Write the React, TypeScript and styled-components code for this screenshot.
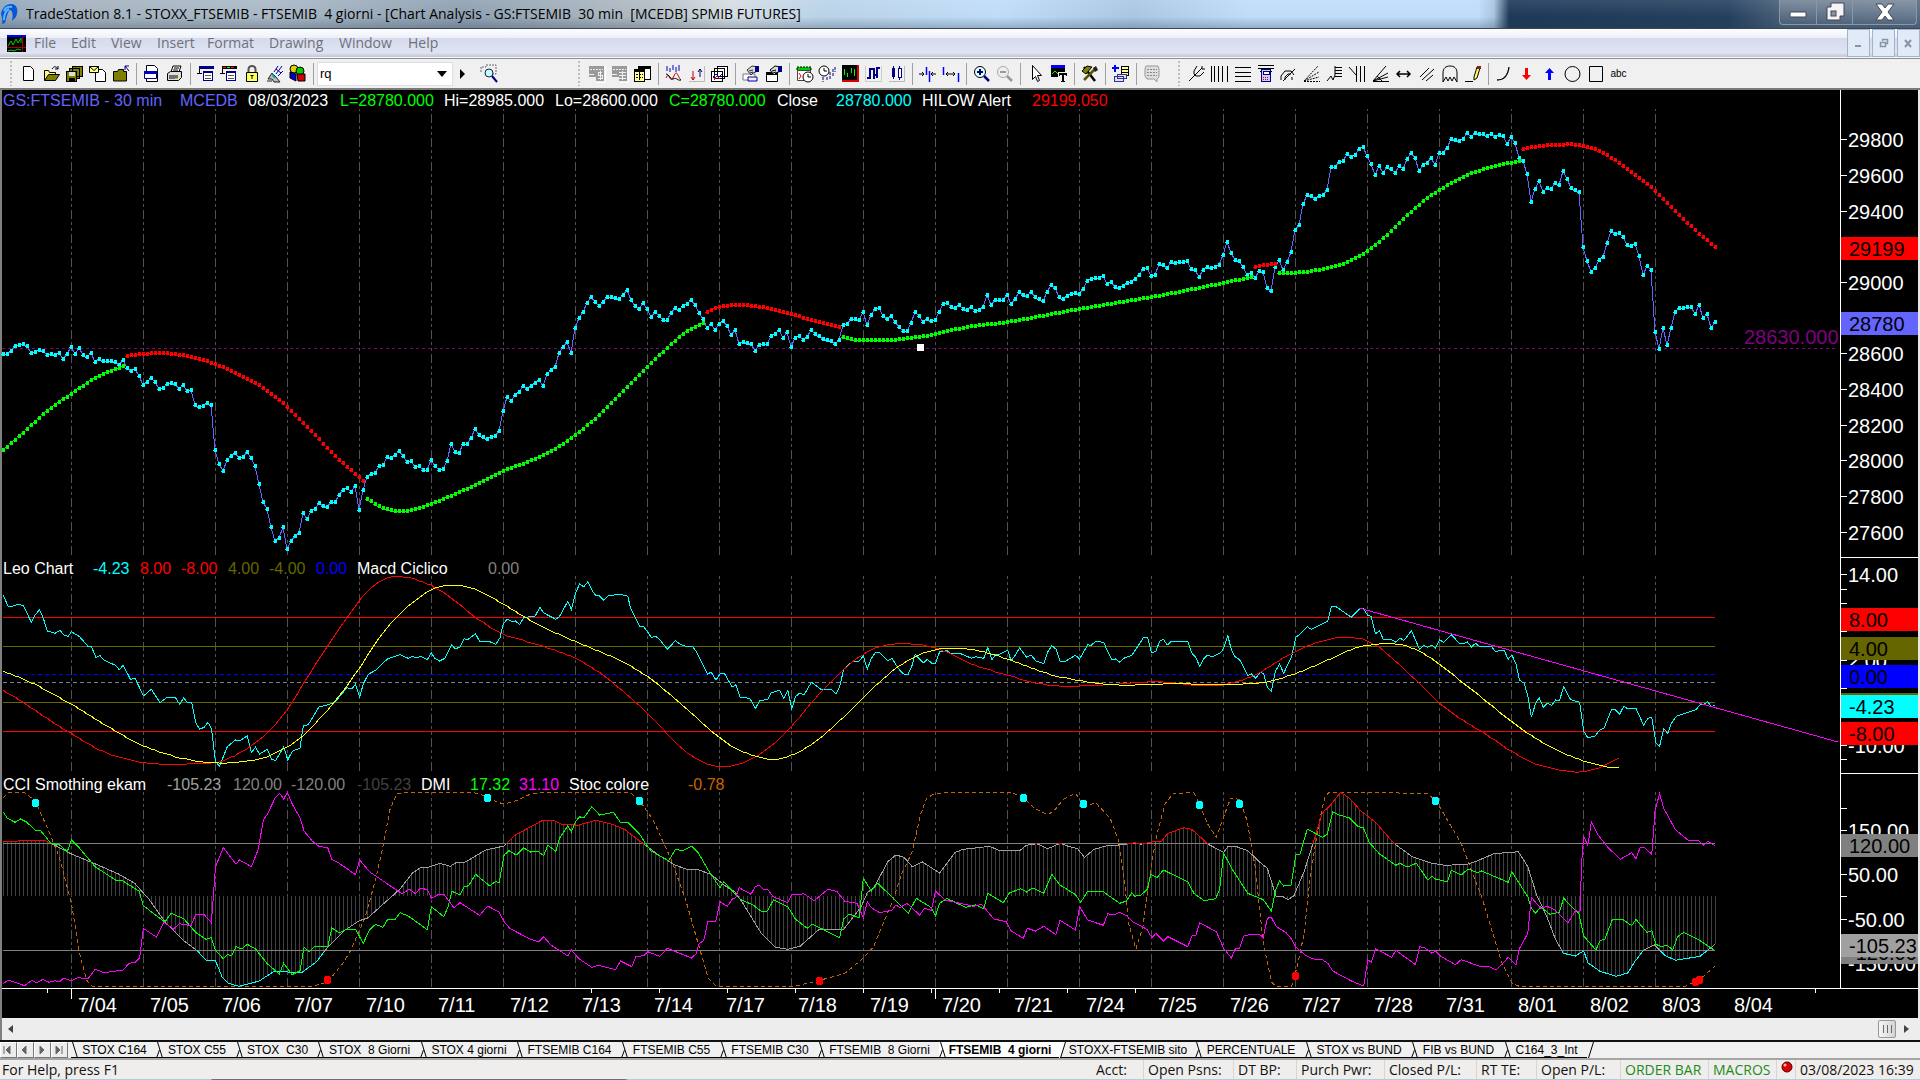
import React from "react";
import styled, { createGlobalStyle } from "styled-components";

const UI = `"Open Sans", "Noto Sans", sans-serif`;
const ARIAL = `"Liberation Sans", Arial, sans-serif`;

const Global = createGlobalStyle`
  * { box-sizing: border-box; }
  body { margin: 0; background: #f0f0f0; }
  button, input, select { font: inherit; color: inherit; }
`;

/* ---------- window frame ---------- */

const Window = styled.div`
  display: flex;
  flex-direction: column;
  min-height: 100vh;
  overflow: hidden;
  font-family: ${UI};
  font-size: 14px;
  background: #f0f0f0;
`;

const TitleBar = styled.header`
  display: flex;
  align-items: stretch;
  height: 29px;
  border-bottom: 1px solid #3c4654;
  background:
    linear-gradient(to bottom, rgba(255, 255, 255, 0.1), rgba(255, 255, 255, 0) 60%, rgba(40, 60, 80, 0.28)),
    linear-gradient(to right, #8fa6bb 0, #a3b1be 4%, #a9b8c6 14%, #8d9fb0 24%, #b1bbc4 34%, #d5dde3 38%, #b9d2e8 43%, #bfdcf8 52%, #a9c6e2 59%, #bfdcf8 65%, #bfdcf9 77%, #a8c4de 77.8%, #1d3858 78.6%, #24405f 90%, #4a6078 93%, #566b82 100%);
`;

const Title = styled.h1`
  flex: 1;
  margin: 0;
  padding-left: 6px;
  align-self: center;
  font-size: 14px;
  line-height: 20px;
  font-weight: 400;
  color: #000;
  white-space: pre;
  overflow: hidden;
`;

const Logo = styled.svg`
  width: 20px;
  height: 28px;
`;

const Controls = styled.div`
  display: flex;
  height: 25px;
  margin-right: 3px;
  border: 1px solid #8998a8;
  border-top: 0;
  border-radius: 0 0 4px 4px;
`;

const ControlButton = styled.button<{ $wide?: boolean }>`
  display: grid;
  place-items: center;
  width: ${(p) => (p.$wide ? 64 : 36)}px;
  padding: 0;
  border: 0;
  border-left: 1px solid #8998a8;
  background: linear-gradient(rgba(255, 255, 255, 0.22), rgba(255, 255, 255, 0.04));
  &:first-child { border-left: 0; }
`;

const MenuBar = styled.nav`
  display: flex;
  align-items: center;
  height: 29px;
  padding-left: 7px;
  background: linear-gradient(#fdfdff 0, #eef1f8 30%, #d5dbec 34%, #dfe4f3 85%, #c9c9dc 97%);
  border-bottom: 1px solid #f8f8f8;
`;

const MenuItem = styled.a<{ $w: number }>`
  width: ${(p) => p.$w}px;
  line-height: 20px;
  color: #6f7178;
  text-decoration: none;
`;

const MenuIcon = styled.svg`
  width: 19px;
  height: 17px;
  margin-right: 8px;
`;

const MdiButtons = styled.div`
  display: flex;
  gap: 2px;
  margin-left: auto;
  height: 28px;
`;

const MdiButton = styled.button`
  display: grid;
  place-items: center;
  width: 23px;
  padding: 0;
  border: 1px solid #9db4cc;
  background: #e0ebf7;
`;

/* ---------- toolbar ---------- */

const Toolbar = styled.div`
  display: flex;
  align-items: center;
  height: 32px;
  padding-left: 10px;
  background: #f0f0f0;
  border-top: 1px solid #8e8e8e;
  border-bottom: 2px solid #7b7b7b;
`;

const Group = styled.div<{ $gap: number }>`
  display: flex;
  align-items: center;
  margin-right: ${(p) => p.$gap}px;
`;

const Grip = styled.span`
  width: 2px;
  height: 25px;
  margin-right: 5px;
  background: repeating-linear-gradient(#bdbdbd 0 2px, transparent 2px 4px);
`;

const Separator = styled.span`
  width: 8px;
  height: 22px;
  background: linear-gradient(#a0a0a0, #a0a0a0) 4px 0 / 1px 100% no-repeat;
`;

const ToolButton = styled.button`
  display: grid;
  place-items: center;
  width: 23px;
  height: 24px;
  padding: 0;
  border: 0;
  background: none;
  font-family: ${ARIAL};
  font-size: 10px;
  svg { width: 17px; height: 17px; overflow: visible; }
`;

const Combo = styled.div`
  display: flex;
  align-items: center;
  width: 136px;
  height: 24px;
  margin-right: 1px;
  background: #fff;
  border: 1px solid #dcdfe6;
`;

const SymbolInput = styled.input`
  flex: 1;
  min-width: 0;
  padding: 0 2px;
  border: 0;
  outline: 0;
  background: none;
  font-family: ${ARIAL};
  font-size: 13px;
`;

const ArrowButton = styled.button<{ $w: number; $gap?: number }>`
  display: grid;
  place-items: center;
  width: ${(p) => p.$w}px;
  height: 22px;
  margin-right: ${(p) => p.$gap ?? 0}px;
  padding: 0;
  border: 0;
  background: none;
`;

/* ---------- chart ---------- */

const Chart = styled.main`
  display: flex;
  flex-direction: column;
  background: #000;
  border-left: 2px solid #808080;
  border-right: 2px solid #e8e8e8;
  font-family: ${ARIAL};
`;

const Panel = styled.section<{ $h: number }>`
  display: flex;
  height: ${(p) => p.$h}px;
`;

const PlotColumn = styled.div`
  display: flex;
  flex-direction: column;
  flex: 1;
  min-width: 0;
`;

const Legend = styled.div<{ $cols: number[] }>`
  display: grid;
  grid-template-columns: ${(p) => p.$cols.map((c) => c + "px").join(" ")} auto;
  justify-content: start;
  height: 19px;
  padding-left: 1px;
  font-size: 16px;
  line-height: 21px;
  white-space: pre;
`;

const LegendItem = styled.span<{ $c: string }>`
  color: ${(p) => p.$c};
`;

const Plot = styled.svg`
  flex: 1;
  width: 100%;
  min-height: 0;
  overflow: visible;
  shape-rendering: crispEdges;
`;

const AxisSvg = styled.svg`
  width: 78px;
  height: 100%;
  overflow: hidden;
  shape-rendering: crispEdges;
  font-size: 20px;
  fill: #fff;
`;

const TimeAxis = styled.svg`
  height: 30px;
  width: 100%;
  font-size: 20px;
  fill: #fff;
  shape-rendering: crispEdges;
`;

/* ---------- bottom bars ---------- */

const ScrollBar = styled.div`
  display: flex;
  align-items: center;
  justify-content: space-between;
  height: 22px;
  padding: 0 8px 0 2px;
  background: #ededed;
  border-left: 2px solid #808080;
`;

const ScrollEnd = styled.div`
  display: flex;
  align-items: center;
  gap: 4px;
`;

const Thumb = styled.button`
  width: 18px;
  height: 18px;
  padding: 0;
  border: 1px solid #979797;
  border-radius: 2px;
  background: repeating-linear-gradient(to right, #6a6a6a 0 1px, transparent 1px 4px) 4px 4px / 9px 8px no-repeat, linear-gradient(to right, #f5f5f5, #d4d4d8);
`;

const TabStrip = styled.nav`
  display: flex;
  height: 18px;
  background: #f0f0f0;
  border-top: 2px solid #111;
`;

const NavButton = styled.button`
  display: grid;
  place-items: center;
  width: 17px;
  padding: 0;
  border: 1px solid #fff;
  border-right-color: #777;
  border-bottom-color: #777;
  background: #ececec;
`;

const NavSpacer = styled.span`
  width: 3px;
`;

const Tab = styled.button<{ $w: number; $active?: boolean }>`
  display: flex;
  width: ${(p) => p.$w}px;
  padding: 0;
  border: 0;
  border-bottom: 1px solid #000;
  background: ${(p) => (p.$active ? "#fff" : "#f0f0f0")};
  font-family: ${ARIAL};
  font-size: 12px;
  line-height: 16px;
  font-weight: ${(p) => (p.$active ? 700 : 400)};
  color: #000;
  white-space: pre;
`;

const TabLabel = styled.span`
  flex: 1;
  padding-right: 6px;
  text-align: center;
`;

const Slant = styled.svg`
  width: 8px;
  height: 16px;
  flex: none;
`;

const StatusBar = styled.footer`
  display: flex;
  height: 21px;
  padding-left: 2px;
  background: #f0eeec;
  border-top: 2px solid #a5a5a5;
  font-size: 14px;
  line-height: 20px;
  color: #111;
  white-space: pre;
`;

const StatusCell = styled.span<{ $w: number; $c?: string }>`
  width: ${(p) => p.$w}px;
  padding-left: 4px;
  border-left: 1px solid #d8d6d4;
  color: ${(p) => p.$c ?? "#111"};
  &:first-of-type { border-left-color: transparent; }
`;

const StatusRight = styled.div`
  display: flex;
  margin-left: auto;
  padding-right: 2px;
`;

const TaskStrip = styled.div`
  height: 2px;
  background: linear-gradient(to right, #b9c8e0 0 211px, #6a7080 212px 625px, #b9c8e0 628px);
`;

/* ---------- icons ---------- */

const k = { fill: "none", stroke: "#000", strokeWidth: 1 };
const crisp = { shapeRendering: "crispEdges" as const };
const Doc = ({ x = 3, y = 1, w = 11, h = 15, s = "#000" }) => (
  <path d={`M${x + 0.5} ${y + 0.5}h${w - 4}l3 3v${h - 4}h${-(w - 1)}z`} fill="#fff" stroke={s} />
);
const Hand = ({ c = "#000" }) => (
  <g><path d="M5 5l5-4 6 1v4l-5 2-2 2z" fill="#ddd" stroke={c} /><path d="M13 1h4v6h-4z" fill="#000080" /><path d="M7 6l4-1M8 8l3-1" stroke={c} /></g>
);
const GreyTable = ({ dollar }: { dollar?: boolean }) => (
  <g {...crisp}>
    <path d="M1 1h15v15H8v-4H1z" fill="#9a9a9a" />
    <path d="M2 4.500h13" stroke="#f0f0f0" strokeDasharray="2 1" />
    {dollar ? (
      <path d="M14 7.500h-4v3h4v3h-4M12 6v9" fill="none" stroke="#f0f0f0" />
    ) : (
      <path d="M8 7.500h7M8 10.500h7M8 13.500h7M11.500 6v9" stroke="#f0f0f0" />
    )}
    <path d="M1 9.500h5M2 15h5" stroke="#f0f0f0" />
    <path d="M17 2v15H9" fill="none" stroke="#fff" />
  </g>
);

const icons: Record<string, React.ReactNode> = {
  new: <Doc />,
  open: <g><path d="M1.500 15V5.500h4l1 2h6v3" fill="#ffff80" stroke="#000" /><path d="M1.500 15.500l4-6h11l-4 6z" fill="#808000" stroke="#000" /><path d="M9 4c2-3 4-3 6 0m0-3v3h-3" {...k} /></g>,
  save: <g {...crisp}><path d="M6.500 1.500h10v10h-10zM3.500 3.500h10v10h-10z" fill="#808000" stroke="#000" /><path d="M.5 6.500h10v10H.5z" fill="#808000" stroke="#000" /><path d="M3 7h6v4H3z" fill="#ddd" /><path d="M3 13h6v4H3z" /></g>,
  mail: <g><Doc x={6} y={4} w={11} h={13} /><path d="M.5 1.500h9v6h-9z" fill="#ffff80" stroke="#000" /><path d="M.5 1.500l4.500 4 4.500-4" {...k} /></g>,
  folder: <g><path d="M1.500 16V6.500h4l1-2h5v2h3V16z" fill="#808000" stroke="#000" /><path d="M13 1h4M13 1v4M13 1l4 5" stroke="#000080" fill="none" /></g>,
  docwin: <g><Doc x={3} y={0} w={12} h={17} /><path d="M1.500 7.500h12v6h-12z" fill="#fff" stroke="#000080" /><path d="M1 6h13v3H1z" fill="#0000c0" /></g>,
  print: <g><path d="M5 7l2-6h8l-2 6" fill="#fff" stroke="#000" /><path d="M1.500 8.500l3-2h11v6l-3 3h-11z" fill="#ddd" stroke="#000" /><path d="M3 11h9M3 13h9M8 3h5M7 5h5" {...k} /><path d="M9 13h3v1H9z" fill="#c0c000" /></g>,
  win1: <g {...crisp}><path d="M2 1h15v3H2z" fill="#000080" /><path d="M6.500 6.500h9v9h-9z" fill="#fff" stroke="#000080" /><path d="M6 6h10v2H6z" fill="#000080" /><path d="M8 10.500h6M8 13.500h6" stroke="#555" /><path d="M2 4v5M0 8.500h5" stroke="#000" /></g>,
  win2: <g {...crisp}><path d="M2 1h15v3H2z" /><path d="M3 2h3v1H3z" fill="#f00" /><path d="M7 2h3v1H7z" fill="#0f0" /><path d="M11 2h3v1h-3z" fill="#f00" /><path d="M6.500 6.500h9v9h-9z" fill="#fff" stroke="#000080" /><path d="M6 6h10v2H6z" fill="#000080" /><path d="M8 10.500h6M8 13.500h6" stroke="#555" /><path d="M2 4v5M0 8.500h5" stroke="#000" /></g>,
  lock: <g><path d="M5.500 8V4a3.500 3 0 0 1 7 0v4" fill="none" stroke="#555" strokeWidth="2" /><path d="M3.500 7.500h11v9h-11z" fill="#ffff60" stroke="#000" /><path d="M9 10v4M7.500 10.500h3" {...k} /></g>,
  satellite: <g><path d="M10 9L16 1M8 7l4-6M12 11l5-5M10 4l5 4" fill="none" stroke="#0000a0" /><path d="M1 16h5M2 14l4-6 4 4 4 5H8l-2-3z" fill="#bbb" stroke="#222" /><path d="M6 9l3 4" stroke="#0aa" strokeWidth="2" /></g>,
  blocks: <g><circle cx="5" cy="4" r="4" fill="#e0d000" stroke="#000" /><circle cx="11" cy="6" r="4" fill="#0c0" stroke="#000" /><path d="M1 7l6 2v7l-6-3z" fill="#00c" stroke="#000" /><path d="M8 9h8v7H9z" fill="#c00" stroke="#000" /></g>,
  find: <g><path d="M1 7V2h5v-2h10v9H9" fill="#eee" stroke="#667" strokeDasharray="2 1" /><circle cx="9" cy="8" r="4" fill="#bff" stroke="#223" /><path d="M12 11l5 6" stroke="#000080" strokeWidth="2" /></g>,
  grey1: <GreyTable dollar />,
  grey2: <GreyTable />,
  table: <g {...crisp}><path d="M4.500 1.500h12v13h-12z" fill="#fff" stroke="#000" /><path d="M4 1h13v3H4z" /><path d="M.5 4.500h10v12H.5z" fill="#ffff90" stroke="#000" /><path d="M0 4h11v3H0z" /><path d="M2 9.500h7M2 12.500h7M5.500 7v9" stroke="#000" strokeDasharray="2 1" /></g>,
  indicator: <g><path d="M2 1v5M5 3v4M8 0v5M11 2v5M14 0v6" stroke="#0000c0" /><path d="M1 13c3-8 5 6 8-2s4 2 7 4" fill="none" stroke="#c00000" /><path d="M1 9c4 0 3 7 7 5s4 2 8 1" {...k} /></g>,
  updown: <g><path d="M16.500 1v15.500H1" fill="none" stroke="#bbb" /><path d="M5 6v9M3 12l2 3 2-3" fill="none" stroke="#c00000" /><path d="M12 12V4M10 7l2-3 2 3" fill="none" stroke="#000080" /></g>,
  stack: <g {...crisp}><path d="M6.500 1.500h10v10h-10zM3.500 3.500h10v10h-10zM.5 6.500h11v10H.5z" fill="#fff" stroke="#000" /><path d="M2 13l3-4 3 3 3-3" fill="none" stroke="#0000c0" /><path d="M3 15l3-4 3 3" fill="none" stroke="#c00" /></g>,
  hand1: <g><path d="M1 9h12v6H1z" fill="#fff" stroke="#778" /><path d="M6 12h9v4H6z" fill="#eef" stroke="#0000a0" /><Hand c="#333" /></g>,
  hand2: <g><path d="M1.500 7.500h11v9h-11z" fill="#fff" stroke="#000" /><path d="M1 7h12v3H1z" /><Hand /></g>,
  session: <g><path d="M1 2h14v4H1z" fill="#0c0" stroke="#000" strokeDasharray="2 1" /><path d="M1.500 5.500h13v10h-13z" fill="#fff" stroke="#444" /><path d="M3 8l2 3-2 3" stroke="#f00" fill="none" /><circle cx="12" cy="12" r="5" fill="#fff" stroke="#000" /><path d="M12 9v3h3" {...k} /></g>,
  clockbars: <g><circle cx="5" cy="6" r="5" fill="#fff" stroke="#000" /><path d="M5 3v3h3" {...k} /><path d="M4 12v5M8 12v4M11 7v7M14 4v7M16 2v5" stroke="#000080" strokeDasharray="3 1" /></g>,
  chartred: <g {...crisp}><path d="M0 0h17v17H0z" fill="#d00" /><path d="M0 0h15v15H0z" /><path d="M2.500 4v6M5.500 8v4M9.500 3v5M12.500 4v7" stroke="#0f0" /></g>,
  bars: <g {...crisp}><path d="M.5 1v15.500H16V1" fill="none" stroke="#ccc" /><path d="M2 13h3V4h4v10M12 13V3h3M9 10h3" fill="none" stroke="#000080" strokeWidth="2" /></g>,
  candles: <g {...crisp}><path d="M16.500 1v15.500H1" fill="none" stroke="#bbb" /><path d="M4 3h3v9H4z" fill="#000080" /><path d="M10 3h3v9h-3z" fill="#fff" stroke="#000080" /><path d="M5.500 1v13M11.500 1v2M11.500 12v3" stroke="#000080" /></g>,
  squeeze: <g><path d="M0 9h5M3 7l2 2-2 2M17 9h-5M14 7l-2 2 2 2" {...k} /><path d="M7.500 2v8M10.500 6v11" stroke="#00f" strokeWidth="1.500" /></g>,
  widen: <g><path d="M1.500 2v8M16.500 8v9" stroke="#00f" strokeWidth="1.500" /><path d="M4 9h9M6 7L4 9l2 2M11 7l2 2-2 2" {...k} /></g>,
  zoomin: <g><circle cx="7" cy="7" r="5.500" fill="#dff" stroke="#000" /><path d="M4 7h6M7 4v6" stroke="#000080" strokeWidth="2" /><path d="M11 11l5 5" stroke="#000080" strokeWidth="2.500" /></g>,
  zoomout: <g><circle cx="7" cy="7" r="5.500" fill="#eee" stroke="#aaa" /><path d="M4 7h6" stroke="#999" strokeWidth="2" /><path d="M11 11l5 5" stroke="#999" strokeWidth="2.500" /></g>,
  pointer: <path d="M5.500 .5v14l3-3 2 5 2-1-2-5h4z" fill="#fff" stroke="#000" />,
  charttext: <g {...crisp}><path d="M1 0h14v12H1z" /><path d="M1 0h14v3H1z" fill="#00f" /><path d="M2 9l3-3 3 3 2-2" fill="none" stroke="#0f0" /><path d="M8 7h10v10H8z" fill="#f0f0f0" /><path d="M9 8h8v3h-1V10h-2v6h1v1h-4v-1h1v-6h-2v1H9z" /></g>,
  tools: <g><path d="M3 2l11 14" stroke="#000" strokeWidth="2.500" /><path d="M1 6l5-5 5 1-6 7z" fill="#808000" stroke="#000" /><path d="M15 3L3 15" stroke="#555500" strokeWidth="2.500" /><path d="M12 3l3-2 2 4-3 2z" fill="#222" /></g>,
  addtable: <g {...crisp}><path d="M9.500 1.500h7v9h-7z" fill="#ffff90" stroke="#000" /><path d="M9 4.500h8M9 7.500h8" stroke="#000" /><path d="M0 3h7M3 0v7" stroke="#00f" strokeWidth="2" /><path d="M5.500 9.500h9v4h-9zM2.500 11.500h9v5h-9z" fill="#ddf" stroke="#333380" /></g>,
  speech: <g><path d="M3 1h12l1 3v8l-2 2v3l-3-3H4l-2-3V4z" fill="#ddd" stroke="#999" /><path d="M4 4.500h10M4 7.500h10M4 10.500h10" stroke="#888" strokeDasharray="2 1" /></g>,
  fork: <path d="M1 16l7-7M9 1L6 6v3l2 2h4l4-4M8 9l6-6M14 1v3h3" {...k} />,
  vlines: <path {...k} {...crisp} d="M.5 1v16M3.500 1v16M7.500 1v16M11.500 1v16M16.500 1v16" />,
  hlines: <path {...k} {...crisp} d="M1 2.500h16M1 7.500h16M1 11.500h16M1 16.500h16" />,
  calc: <g {...crisp}><path d="M1 .5h16M1 3.500h16M3 6.500h12" {...k} /><path d="M4.500 4.500h9v12h-9z" fill="#ccf" stroke="#000080" /><path d="M6 6h6v3H6z" fill="#fff" stroke="#000080" /><path d="M6 12.500h6M6 14.500h6" stroke="#c00" strokeDasharray="1 1" /></g>,
  arcs: <path d="M1 15v-4l4-5h6l3 4M5 15v-3l3-3h3M3 16L15 4M12 15v-3" {...k} />,
  fan1: <path d="M1 16L15 1M1 16l15-9M1 16l15-4M1 16.500h16" {...k} strokeDasharray="2 1" />,
  steps: <path {...k} d="M1 16l4-5 2 4 2-5V1M9 2.500h7M9 5.500h7M9 8.500h7M9 11.500h7" />,
  pitch: <path {...k} d="M0 2l7 8M7.500 1v16M11.500 1v16M15.500 1v16" />,
  fan2: <path d="M1 16L14 1M1 16l15-8M1 16l15-4M1 16.500h16M5 11l5 5" {...k} />,
  harrow: <path d="M2 9h13M5 6L2 9l3 3M12 6l3 3-3 3" {...k} strokeWidth="1.500" />,
  parallel: <path d="M2 12L11 3M4 15L16 4M8 16l7-6" {...k} />,
  ghost: <path d="M2 17V8c0-5 3-7 7-7s7 2 7 7v9l-3-5-2 4-2-4-2 4-2-4z" {...k} />,
  pencil: <g><path d="M10 12L13 2l3 1-3 10-3 2z" fill="#ffff60" stroke="#000" /><path d="M13 1h4v3h-4z" fill="#802020" /><path d="M1 16.500h8" {...k} /></g>,
  curve: <path d="M2 15c7 0 11-5 12-13" {...k} strokeWidth="1.300" />,
  redarrow: <path d="M7 3h3v7h3l-4.500 5L4 10h3z" fill="#f00" />,
  bluearrow: <path d="M7 15h3V8h3L8.500 3 4 8h3z" fill="#00f" />,
  circle: <circle cx="8.500" cy="9" r="7.500" {...k} />,
  rect: <path d="M2.500 1.500h13v15h-13z" {...k} />,
};

const Tool = ({ name }: { name: string }) =>
  name === "|" ? (
    <Separator />
  ) : (
    <ToolButton aria-label={name === "abc" ? undefined : name}>
      {name === "abc" ? "abc" : <svg viewBox="0 0 17 17">{icons[name]}</svg>}
    </ToolButton>
  );

const Tools = ({ list }: { list: string }) => (
  <>{list.split(" ").map((n, i) => <Tool key={i} name={n} />)}</>
);

/* ---------- series data ---------- */

type Pt = [number, number];
const FIRST = 3;
const LAST = 1715;
const STEP = 4;

// One close per 30 minute bar, in thirds of a pixel below the stated base line.
const closesA = "161 161 153 139 134 132 138 158 155 151 152 165 162 164 159 177 161 140 161 143 165 171 159 185 177 182 182 184 186 195 180 204 213 207 228 255 246 233 246 267 263 252 249 252 266 255 272 270 314 320 318 309 315 450 491 513 480 467 458 473 470 455 474 497 552 605 627 681 723 713 680 747 722 708 699 638 657 632 627 608 617 621 605 605 585 570 563 575 557 630 569 531 521 519 497 495 470 474 464 453 467 486 483 501 497 510 510 480 497 510 506 482 431 456 459 432 432 413 386 405 411 416 411 408 392 332 290 303 285 275 257 267 257 249 239 258 221 210 201 158 140 125 160";
const closesB = "653 623 606 578 560 576 588 575 560 561 563 567 555 539 570 588 597 578 597 621 605 618 630 630 608 593 600 588 581 569 584 608 627 654 641 660 641 632 647 675 660 702 695 698 701 722 704 702 702 677 671 661 684 665 710 683 677 690 681 661 671 678 687 689 692 702 689 645 641 628 627 630 605 644 614 596 594 617 628 617 637 651 662 662 638 605 617 635 626 633 629 605 583 578 590 593 585 596 600 590 603 600 590 554 584 569 569 569 554 582 566 547 554 558 545 560 566 573 545 524 533 562 567 557 551 549 552 536 512 508 503 503 497 522 515 531 534 527 518 516 508 494 478 474 498 494 461 464 474 455 459 455 455 453 477 480 501 479 470 473 471 464 434 395 429 450 453 470 495 488 504 482 485 534 543 472 449 480 455 425 359 344 281 254 257 267 257 255 239 170 171 155 153 131 141 135 117 110 137 162 195 167 188 170 176 189 167 177 147 128 144 183 164 158 143 165 128 129 113 87 90 94 86 68 81 68 72 72 78 72 81 75 78 102 81 98 144 153 191 276 237 212 246 233 237 220 225 182 207 234 240 245 410 452 487 474 449 440 399 362 372 368 380 404 408 402 437 495 467 480 665 717 653 704 653 605 594 594 591 591 612 584 624 611 654 636";

const nums = (s: string) => s.trim().split(/\s+/).map(Number);
const price: Pt[] = [
  ...nums(closesA).map((v) => 300 + v / 3),
  ...nums(closesB).map((v) => 110 + v / 3),
].map((y, i) => [FIRST + i * STEP, Math.round(y)]);

const pairs = (s: string): Pt[] => {
  const n = nums(s);
  const out: Pt[] = [];
  for (let i = 0; i < n.length; i += 2) out.push([n[i], n[i + 1]]);
  return out;
};

// Indicator readings come in three blocks that start at x = 0, 600 and 1200.
const blocks = (...parts: string[]): Pt[] =>
  parts.flatMap((s, i) => pairs(s).map(([x, y]): Pt => [i * 600 + x / 2.45, 550 + y / 3]));

const smoothAt = (p: Pt[], x: number) => {
  let i = 0;
  while (i < p.length - 2 && p[i + 1][0] <= x) i++;
  const slope = (j: number) => {
    const a = p[Math.max(0, j - 1)];
    const b = p[Math.min(p.length - 1, j + 1)];
    return (b[1] - a[1]) / (b[0] - a[0]);
  };
  const h = p[i + 1][0] - p[i][0];
  const t = (x - p[i][0]) / h;
  const t2 = t * t;
  const t3 = t2 * t;
  return (2 * t3 - 3 * t2 + 1) * p[i][1] + (t3 - 2 * t2 + t) * h * slope(i) + (3 * t2 - 2 * t3) * p[i + 1][1] + (t3 - t2) * h * slope(i + 1);
};

const sample = (p: Pt[]): Pt[] => {
  const out: Pt[] = [];
  const end = p[p.length - 1][0] + 1;
  for (let x = Math.round(p[0][0]); x <= end; x += STEP) out.push([x, Math.round(smoothAt(p, x))]);
  return out;
};

const averages: { c: string; p: string }[] = [
  { c: "#00ff00", p: "3 450 27 429 47 411 71 394 95 378 123 366" },
  { c: "#ff0000", p: "127 356 143 354 160 353 175 354 195 358 215 364 239 375 263 388 287 407 311 431 335 456 363 481" },
  { c: "#00ff00", p: "367 499 383 508 399 511 415 509 431 504 455 494 479 483 503 471 527 462 551 451 575 435 599 415 620 394 635 379 651 363 667 348 683 334 703 323" },
  { c: "#ff0000", p: "707 312 719 307 743 305 767 308 791 314 815 321 839 327" },
  { c: "#00ff00", p: "843 337 859 340 887 340 911 338 935 334 967 327 1007 322 1079 309 1151 297 1223 283 1251 277" },
  { c: "#ff0000", p: "1255 267 1263 265 1275 264" },
  { c: "#00ff00", p: "1279 273 1303 272 1327 268 1343 264 1367 251 1391 231 1415 208 1439 190 1467 175 1495 166 1519 161" },
  { c: "#ff0000", p: "1523 149 1539 146 1551 145 1579 145 1599 151 1619 163 1643 181 1655 191 1675 211 1695 230 1715 247" },
];

const leo = blocks(
  "8 136 20 169 30 169 45 163 57 167 77 217 86 195 97 179 106 205 116 243 135 250 147 241 155 254 167 259 175 245 195 260 216 290 224 290 235 322 245 317 255 331 283 346 292 359 302 346 320 389 331 384 351 438 371 418 392 458 410 442 430 443 440 463 450 443 460 459 470 458 480 519 489 538 500 532 509 517 518 535 528 635 538 648 557 590 577 570 587 573 606 557 616 608 626 592 636 612 655 598 665 627 675 632 695 591 705 630 716 604 735 594 743 527 755 524 782 470 800 466 820 457 850 413 862 417 871 403 881 441 890 402 902 373 920 361 935 343 950 326 980 314 1000 325 1010 319 1021 324 1030 319 1047 329 1057 309 1066 326 1077 333 1090 325 1107 284 1115 297 1127 291 1137 266 1145 270 1165 251 1175 274 1200 275 1215 283 1225 263 1233 221 1243 208 1253 214 1263 213 1273 224 1283 203 1311 198 1323 172 1332 189 1362 208 1371 199 1391 154 1400 178 1410 130 1420 101 1430 111 1440 95 1450 120 1460 137 1469 138",
  "9 151 20 137 50 133 68 139 75 175 97 229 107 230 126 262 136 259 146 268 165 298 185 272 195 282 215 291 226 288 235 303 264 373 272 366 284 390 294 372 305 371 324 411 333 404 343 442 367 445 381 475 391 453 411 448 419 429 440 421 450 445 460 421 470 476 479 440 488 430 500 434 518 397 540 417 567 419 578 432 587 411 597 358 620 333 635 333 645 318 655 357 665 325 675 307 685 307 705 333 715 325 735 362 745 373 755 373 765 345 772 313 792 339 802 328 813 340 822 340 832 306 842 304 850 301 860 312 880 309 910 325 920 320 940 325 950 292 960 329 970 313 980 312 999 300 1007 332 1018 315 1028 293 1045 322 1056 315 1068 333 1087 341 1097 305 1107 287 1117 297 1127 333 1137 336 1165 316 1175 327 1195 284 1203 287 1214 274 1234 277 1244 305 1255 330 1263 327 1273 336 1285 324 1303 316 1332 262 1342 264 1351 309 1362 303 1371 274 1380 268 1390 285 1400 274 1440 275 1450 309 1460 323 1469 349",
  "10 325 19 315 30 320 50 309 58 295 68 257 77 300 87 322 97 329 117 376 126 372 137 385 147 366 156 372 165 412 175 424 185 363 195 342 205 370 225 318 235 262 245 253 263 230 273 238 313 213 322 170 332 169 371 202 391 176 400 176 411 196 419 199 430 251 440 243 449 268 470 269 480 277 490 264 499 272 518 242 538 298 548 286 558 292 568 285 577 295 587 270 597 277 616 254 635 280 645 282 655 276 665 291 675 280 685 290 715 291 725 306 735 300 745 301 755 328 764 315 774 341 783 391 794 400 803 438 812 501 822 461 831 443 841 472 851 460 862 466 871 450 881 451 891 410 908 449 930 457 940 544 950 563 968 558 980 539 990 534 1008 479 1018 480 1028 493 1038 469 1048 476 1068 475 1087 526 1097 505 1107 502 1117 578 1126 589 1136 536 1146 550 1155 520 1167 499 1185 491 1215 479 1225 465 1235 462 1244 455 1253 470 1262 466",
);

const macdFast = blocks(
  "8 421 60 460 116 506 175 551 250 603 320 630 380 640 480 640 540 634 600 600 655 548 704 478 755 378 803 288 850 203 900 125 945 86 980 79 1020 89 1060 109 1110 148 1165 202 1233 252 1320 285 1410 325 1455 357",
  "30 397 90 460 140 520 205 600 265 642 305 649 350 638 410 597 470 527 530 442 590 367 640 318 690 288 740 280 790 285 850 306 910 342 999 376 1060 396 1110 406 1190 406 1280 400 1370 394 1450 405",
  "5 406 50 405 100 392 150 365 233 305 320 266 370 262 411 273 450 303 520 380 587 460 630 500 700 552 763 604 830 645 900 663 945 663 980 652 1026 623",
);

const macdSlow = blocks(
  "8 364 80 400 175 463 290 548 360 592 440 623 510 636 570 637 640 625 690 600 740 560 790 497 830 440 880 355 930 262 980 192 1030 140 1070 113 1110 105 1165 118 1233 162 1310 218 1410 275",
  "0 305 60 338 120 383 200 463 293 563 350 605 420 627 470 615 520 582 570 532 645 443 700 380 760 328 820 299 870 294 930 302 1000 328 1100 372 1175 391 1230 401 1290 404 1400 400",
  "0 401 60 401 120 400 165 395 233 371 300 337 380 294 411 286 460 280 510 290 560 320 620 375 700 452 763 514 840 578 920 624 985 648 1026 653",
);

const cci = blocks(
  "8 875 62 872 108 871 135 886 175 912 240 945 290 972 330 1000 365 1048 404 1115 450 1172 482 1201 505 1230 528 1232 545 1283 560 1300 585 1309 608 1302 635 1293 670 1265 740 1267 775 1236 800 1196 845 1141 880 1112 900 1105 950 1050 980 1017 1010 970 1030 953 1050 952 1077 940 1103 949 1117 938 1140 936 1190 900 1235 888 1260 857 1300 830 1330 811 1355 811 1375 822 1415 826 1460 811",
  "30 823 60 838 90 866 105 880 140 912 180 943 210 957 240 959 270 972 310 1010 330 1025 350 1060 395 1150 430 1192 460 1198 490 1189 535 1140 597 1138 640 1070 655 1028 672 1011 705 935 725 915 745 922 765 950 790 936 832 969 870 907 890 898 955 889 975 900 1030 900 1045 886 1070 881 1097 896 1127 880 1150 890 1170 896 1187 922 1210 898 1240 888 1280 884 1310 878 1325 883 1360 874 1375 876 1390 851 1430 833 1450 838",
  "20 883 58 907 68 890 90 890 117 902 147 937 165 955 187 1041 200 1038 216 1049 230 1037 255 965 282 860 300 788 320 765 344 727 365 743 395 784 430 817 475 880 520 920 565 939 600 946 655 943 680 932 720 911 780 905 803 950 825 1035 850 1100 870 1165 890 1210 920 1218 940 1202 950 1238 980 1264 1020 1279 1048 1269 1065 1235 1087 1200 1113 1185 1140 1217 1165 1231 1225 1219 1262 1183",
);

const dmiPlus = blocks(
  "8 787 18 805 37 817 50 807 65 816 86 840 100 843 125 880 146 885 165 905 175 869 195 895 233 950 283 990 300 992 341 1024 351 1067 404 1116 419 1090 450 1106 480 1148 505 1168 518 1163 528 1201 547 1226 557 1214 568 1217 578 1190 592 1197 606 1183 626 1197 655 1241 684 1272 695 1240 716 1274 735 1262 745 1192 757 1205 772 1189 803 1190 813 1134 831 1148 845 1140 871 1138 890 1180 905 1140 920 1123 938 1132 950 1108 968 1108 980 1088 1000 1098 1047 1139 1057 1070 1087 1100 1098 1070 1107 1024 1127 1034 1137 1011 1148 1007 1165 973 1200 1008 1213 995 1223 997 1235 915 1247 902 1265 915 1283 894 1300 906 1317 903 1332 917 1342 886 1362 904 1371 865 1391 827 1400 845 1410 815 1420 800 1430 804 1450 770 1469 795",
  "33 787 50 817 68 817 97 852 110 878 125 903 168 932 185 898 203 902 225 889 240 907 265 960 294 1013 303 995 343 1048 375 1065 395 1084 410 1083 425 1050 460 1070 479 1108 508 1135 520 1123 545 1137 587 1163 597 1107 610 1092 635 1103 645 985 665 1023 680 1000 715 1040 755 1090 775 1045 812 1073 822 1098 832 1060 850 1045 895 1072 920 1065 940 1076 950 1030 988 1058 1003 1029 1030 1016 1045 1026 1060 1014 1087 1030 1107 973 1127 1005 1165 1034 1178 1057 1195 1023 1233 1025 1273 1060 1290 1053 1303 1028 1310 1039 1325 1035 1340 1020 1350 973 1365 983 1380 960 1440 995 1455 1030",
  "10 1052 38 1046 48 1020 58 910 80 960 117 1030 155 1049 175 1084 185 1020 195 993 205 1008 223 1005 235 915 245 913 263 837 300 862 312 853 325 785 340 795 365 803 388 830 400 833 415 878 440 912 480 946 490 940 508 951 530 940 558 990 568 978 577 987 606 995 616 961 640 975 657 957 680 968 690 963 755 997 764 965 783 1002 803 1040 812 1075 822 1090 835 1070 857 1093 880 1087 891 1045 908 1067 928 1090 940 1158 970 1200 980 1172 992 1167 1010 1110 1035 1108 1058 1127 1068 1108 1095 1147 1107 1142 1117 1183 1130 1190 1145 1186 1158 1200 1170 1160 1185 1147 1225 1172 1260 1201",
);

const dmiMinus = blocks(
  "8 1301 20 1290 60 1307 78 1291 90 1298 105 1288 120 1297 135 1292 146 1296 155 1285 175 1292 190 1283 216 1286 233 1258 255 1268 302 1260 316 1240 331 1237 342 1224 351 1135 383 1161 402 1117 425 1137 440 1121 468 1127 480 1092 500 1094 518 1118 528 950 547 893 578 942 587 930 616 950 633 897 645 810 655 793 675 742 685 730 695 747 704 727 716 762 735 803 745 843 765 873 780 888 803 894 813 928 831 940 871 974 881 930 905 965 985 1031 1003 1018 1018 1031 1030 1014 1047 1019 1057 1045 1075 1033 1088 1034 1112 1073 1127 1058 1175 1096 1195 1068 1223 1087 1235 1115 1250 1136 1300 1168 1320 1175 1332 1160 1350 1185 1391 1218 1400 1200 1420 1228 1450 1252 1465 1246",
  "38 1259 50 1233 78 1250 88 1220 107 1217 117 1205 146 1219 165 1195 224 1224 235 1212 243 1180 254 1172 264 1115 284 1113 294 1055 312 1069 325 1046 333 1043 341 1013 370 1033 380 1010 390 1006 400 1018 412 1020 424 1040 460 1058 470 1034 490 1035 498 1030 525 1052 558 1018 580 1024 600 1054 630 1060 645 1104 655 1055 665 1073 685 1088 715 1081 725 1065 735 1073 752 1060 783 1095 795 1075 812 1081 822 1023 845 1050 915 1069 935 1063 965 1107 995 1115 1007 1142 1037 1165 1047 1135 1067 1143 1087 1129 1117 1154 1127 1111 1165 1140 1175 1070 1195 1110 1233 1126 1244 1091 1260 1095 1273 1087 1290 1097 1305 1115 1340 1138 1352 1163 1362 1150 1381 1173 1391 1160 1440 1190 1450 1158 1460 1156 1469 1118",
  "40 1145 58 1195 77 1224 87 1195 97 1195 107 1158 125 1153 137 1155 145 1152 155 1163 165 1105 175 1102 187 1130 210 1147 225 1168 235 1192 260 1217 280 1228 300 1229 313 1240 325 1263 371 1293 401 1308 411 1229 420 1237 430 1196 470 1222 480 1201 528 1244 538 1190 550 1193 568 1210 577 1203 590 1219 626 1244 640 1229 690 1251 705 1248 725 1260 740 1243 755 1222 774 1245 783 1195 803 1150 812 1042 835 1075 850 1069 870 1080 901 1119 920 1082 931 1085 935 940 940 858 950 887 959 815 975 855 1000 893 1030 928 1058 908 1068 927 1078 893 1088 892 1107 913 1115 780 1126 731 1136 775 1165 839 1195 870 1222 873 1233 886 1244 874 1262 887",
);

const stoc = blocks(
  "8 743 20 728 60 728 86 752 120 845 145 920 175 1060 195 1210 212 1290 225 1308 770 1308 803 1295 840 1240 860 1200 895 1100 920 990 940 880 955 780 972 732 985 728 1160 728 1195 740 1215 755 1235 762 1265 752 1300 732 1325 728 1469 728",
  "75 728 97 752 130 810 175 930 210 1050 245 1200 265 1285 285 1308 480 1308 535 1292 600 1270 640 1230 670 1190 715 1060 740 970 765 905 785 795 800 745 818 732 850 728 1010 728 1037 743 1065 775 1097 794 1112 783 1135 748 1165 730 1185 768 1215 759 1250 805 1270 870 1285 990 1295 1120 1313 1197 1330 1130 1350 950 1365 850 1385 760 1405 730 1455 728 1468 762",
  "20 825 40 862 58 800 75 745 97 748 115 810 135 950 155 1180 175 1295 185 1308 225 1308 240 1240 255 1150 270 980 290 830 305 745 315 728 480 728 510 732 555 730 577 750 640 880 690 1040 740 1240 765 1300 780 1308 1190 1308 1225 1288 1262 1248",
);

const line = (p: Pt[]) => p.map(([x, y]) => `${x.toFixed(1)},${y.toFixed(1)}`).join(" ");
const dots = (p: Pt[]) => p.map(([x, y]) => `M${x - 1} ${y - 2}h3v4h-3zM${x - 2} ${y}h1v1h-1z`).join("");

const linearAt = (p: Pt[], x: number) => {
  let i = 0;
  while (i < p.length - 2 && p[i + 1][0] <= x) i++;
  const t = (x - p[i][0]) / (p[i + 1][0] - p[i][0]);
  return p[i][1] + t * (p[i + 1][1] - p[i][1]);
};

const barXs = price.map(([x]) => x);
const ZERO = 896;
const days = "7/04 7/05 7/06 7/07 7/10 7/11 7/12 7/13 7/14 7/17 7/18 7/19 7/20 7/21 7/24 7/25 7/26 7/27 7/28 7/31 8/01 8/02 8/03 8/04".split(" ");

/* The plots share one coordinate space; each shows the slice from `top` down. */
const Canvas = ({ top, children }: { top: number; children: React.ReactNode }) => (
  <Plot>
    <g transform={`translate(-2 ${-top})`}>{children}</g>
  </Plot>
);

const Grid = ({ from, to, phase }: { from: number; to: number; phase: number }) => (
  <g stroke="#505050" strokeDasharray="9 3 3 3 3 3" strokeDashoffset={phase}>
    {days.slice(0, 23).map((d, i) => <line key={d} x1={71.5 + i * 72} x2={71.5 + i * 72} y1={from} y2={to} />)}
  </g>
);

const Level = ({ y, c, dash }: { y: number; c: string; dash?: boolean }) => (
  <line x1={FIRST} x2={LAST} y1={y + 0.5} y2={y + 0.5} stroke={c} strokeDasharray={dash ? "4 3" : undefined} />
);

type Mark = { y: number; t?: string; bg?: string; fg?: string };
const Axis = ({ top, marks, last }: { top: number; marks: Mark[]; last?: boolean }) => (
  <AxisSvg>
    <g transform={`translate(0 ${-top})`}>
      {marks.map((m, i) =>
        m.bg ? (
          <g key={i}>
            <rect x="1" y={m.y - 11} width="77" height="23" fill={m.bg} />
            {m.t && <text x="9" y={m.y + 8} fill={m.fg ?? "#000"}>{m.t}</text>}
          </g>
        ) : (
          <g key={i}>
            <rect x="1" y={m.y} width="6" height="1" />
            {m.t && <text x="8" y={m.y + 8}>{m.t}</text>}
          </g>
        ),
      )}
      <rect x="0" y={top} width="1" height="500" />
    </g>
    {!last && <rect x="0" y="100%" width="78" height="1" transform="translate(0 -1)" />}
  </AxisSvg>
);

const priceMarks: Mark[] = [
  { y: 139, t: "29800" }, { y: 175, t: "29600" }, { y: 211, t: "29400" }, { y: 282, t: "29000" }, { y: 318, t: "28800" },
  { y: 353, t: "28600" }, { y: 389, t: "28400" }, { y: 425, t: "28200" }, { y: 460, t: "28000" }, { y: 496, t: "27800" }, { y: 532, t: "27600" },
  { y: 248, t: "29199", bg: "#ff0000" }, { y: 323, t: "28780", bg: "#6464ff" },
];
const leoMarks: Mark[] = [
  { y: 574, t: "14.00" }, { y: 589 }, { y: 603 }, { y: 631 }, { y: 660, t: "2.00" }, { y: 688 }, { y: 745, t: "-10.00" }, { y: 759 },
  { y: 619, t: "8.00", bg: "#ff0000" }, { y: 648, t: "4.00", bg: "#666600" }, { y: 676, t: "0.00", bg: "#0000ff" },
  { y: 704, bg: "#666600" }, { y: 706, t: "-4.23", bg: "#00ffff" }, { y: 733, t: "-8.00", bg: "#ff0000" },
];
const cciMarks: Mark[] = [
  { y: 808 }, { y: 830, t: "150.00" }, { y: 874, t: "50.00" }, { y: 896 }, { y: 919, t: "-50.00" }, { y: 963, t: "-150.00" },
  { y: 845, t: "120.00", bg: "#808080" }, { y: 952, t: "-120.00", bg: "#808080" }, { y: 945, t: "-105.23", bg: "#a0a0a0" },
];

const Legends = ({ cols, items }: { cols: number[]; items: [string, string][] }) => (
  <Legend $cols={cols}>
    {items.map(([t, c], i) => <LegendItem key={i} $c={c}>{t}</LegendItem>)}
  </Legend>
);

const highDots: Pt[] = [[35, 803], [487, 798], [639, 801], [1023, 798], [1083, 804], [1199, 805], [1239, 804], [1435, 801]];
const lowDots: Pt[] = [[327, 980], [819, 981], [1295, 976], [1695, 982], [1699, 980]];
const cciLine = line(cci);

const menu: [string, number][] = [["File", 37], ["Edit", 40], ["View", 46], ["Insert", 50], ["Format", 62], ["Drawing", 70], ["Window", 69], ["Help", 40]];
const tabs: [string, number][] = [
  ["STOX C164", 85], ["STOX C55", 80], ["STOX  C30", 81], ["STOX  8 Giorni", 103], ["STOX 4 giorni", 96], ["FTSEMIB C164", 105], ["FTSEMIB C55", 99],
  ["FTSEMIB C30", 98], ["FTSEMIB  8 Giorni", 121], ["FTSEMIB  4 giorni", 120], ["STOXX-FTSEMIB sito", 136], ["PERCENTUALE", 110], ["STOX vs BUND", 106], ["FIB vs BUND", 93], ["C164_3_Int", 83],
];
const ACTIVE = 9;
const navIcons = ["M2 1v8M8 1L4 5l4 4z", "M7 1L3 5l4 4z", "M4 1l4 4-4 4z", "M3 1l4 4-4 4zM9 1v8"];
const navNames = ["First sheet", "Previous sheet", "Next sheet", "Last sheet"];

export default function App() {
  return (
    <Window>
      <Global />
      <TitleBar>
        <Logo viewBox="0 0 20 28">
          <path d="M1 14C2 8 6 4 11 4c6 0 8 6 5 13l-4 4c1-6 1-10-2-11-2 1-3 6-5 13l-3 1c1-3 0-6-1-10z" fill="#0b55d8" />
          <path d="M4 11c1-3 4-5 8-4M4 20c0-5 1-9 5-11" fill="none" stroke="#56b8ff" strokeWidth="2" />
        </Logo>
        <Title>TradeStation 8.1 - STOXX_FTSEMIB - FTSEMIB  4 giorni - [Chart Analysis - GS:FTSEMIB  30 min  [MCEDB] SPMIB FUTURES]</Title>
        <Controls>
          <ControlButton aria-label="Minimize"><svg width="18" height="18"><rect x="1" y="9" width="16" height="5" rx="1" fill="#fff" stroke="#445" /></svg></ControlButton>
          <ControlButton aria-label="Restore"><svg width="20" height="20"><path d="M6 1h13v13h-4v4H2V5h4z" fill="#f4f4f4" stroke="#445" /><rect x="6" y="9" width="5" height="5" fill="#8497aa" stroke="#445" /></svg></ControlButton>
          <ControlButton $wide aria-label="Close"><svg width="20" height="18"><path d="M1 1h6l3 4 3-4h6l-6 8 6 8h-6l-3-4-3 4H1l6-8z" fill="#fff" stroke="#445" /></svg></ControlButton>
        </Controls>
      </TitleBar>

      <MenuBar>
        <MenuIcon viewBox="0 0 19 17"><path d="M0 0h19v17H0z" /><path d="M0 0h19v2H0z" fill="#00f" /><path d="M1 11l3-5 2 4 3-6 2 4 3-5v5" fill="none" stroke="#0c0" /><path d="M0 12.500h19M15.500 2v15" stroke="#a00" /><path d="M1 16l3-1 3 1 4-2 3 1" stroke="#0c0" fill="none" /></MenuIcon>
        {menu.map(([t, w]) => <MenuItem key={t} $w={w} href="#">{t}</MenuItem>)}
        <MdiButtons>
          <MdiButton aria-label="Minimize chart"><svg width="9" height="9"><rect x="1" y="6" width="6" height="2" fill="#8595a5" /></svg></MdiButton>
          <MdiButton aria-label="Restore chart"><svg width="10" height="10"><path d="M3.500 3V1.500h5v4H7M1.500 4.500h5v4h-5z" fill="none" stroke="#8595a5" strokeWidth="1.500" /></svg></MdiButton>
          <MdiButton aria-label="Close chart"><svg width="9" height="9"><path d="M1 1l6 7M7 1L1 8" stroke="#8595a5" strokeWidth="2" /></svg></MdiButton>
        </MdiButtons>
      </MenuBar>

      <Toolbar>
        <Group $gap={78}>
          <Grip />
          <Tools list="new open save mail folder | docwin print | win1 win2 lock satellite blocks |" />
          <Combo>
            <SymbolInput aria-label="Symbol" defaultValue="rq" />
            <ArrowButton $w={20} aria-label="Symbol list"><svg width="10" height="6"><path d="M0 0h10L5 6z" /></svg></ArrowButton>
          </Combo>
          <ArrowButton $w={16} $gap={7} aria-label="Go"><svg width="5" height="10"><path d="M0 0l5 5-5 5z" /></svg></ArrowButton>
          <Tools list="find" />
        </Group>
        <Group $gap={15}>
          <Grip />
          <Tools list="grey1 grey2 table | indicator updown stack | hand1 hand2 | session clockbars chartred bars candles | squeeze widen | zoomin zoomout | pointer charttext | tools | addtable | speech" />
        </Group>
        <Group $gap={0}>
          <Grip />
          <Tools list="fork vlines hlines calc arcs fan1 steps pitch fan2 harrow parallel ghost pencil | curve redarrow bluearrow circle rect abc" />
        </Group>
      </Toolbar>

      <Chart>
        <Panel $h={468}>
          <PlotColumn>
            <Legends
              cols={[177, 68, 92, 104, 111, 114, 108, 59, 86, 110]}
              items={[["GS:FTSEMIB - 30 min", "#6464ff"], ["MCEDB", "#6464ff"], ["08/03/2023", "#fff"], ["L=28780.000", "#00ff00"], ["Hi=28985.000", "#fff"], ["Lo=28600.000", "#fff"], ["C=28780.000", "#00ff00"], ["Close", "#fff"], ["28780.000", "#00ffff"], ["HILOW Alert", "#fff"], ["29199.050", "#ff0000"]]}
            />
            <Canvas top={109}>
              <Grid from={109} to={555} phase={19} />
              <line x1="2" x2="1836" y1="348.500" y2="348.500" stroke="#800080" strokeDasharray="3 3" />
              <polyline points={line(price)} fill="none" stroke="#6464ff" />
              <path d={dots(price)} fill="#00ffff" />
              {averages.map((a, i) => <path key={i} d={dots(sample(pairs(a.p)))} fill={a.c} />)}
              <rect x="917" y="344" width="7" height="7" fill="#fff" />
              <text x="1744" y="344" fill="#800080" fontSize="20">28630.000</text>
            </Canvas>
          </PlotColumn>
          <Axis top={90} marks={priceMarks} />
        </Panel>

        <Panel $h={216}>
          <PlotColumn>
            <Legends
              cols={[90, 47, 41, 47, 41, 47, 41, 131]}
              items={[["Leo Chart", "#fff"], ["-4.23", "#00ffff"], ["8.00", "#ff0000"], ["-8.00", "#ff0000"], ["4.00", "#666600"], ["-4.00", "#666600"], ["0.00", "#0000ff"], ["Macd Ciclico", "#fff"], ["0.00", "#808080"]]}
            />
            <Canvas top={577}>
              <Grid from={576} to={771} phase={6} />
              <Level y={617} c="#ff0000" />
              <Level y={646} c="#666600" />
              <Level y={674} c="#0000ff" dash />
              <Level y={682} c="#808080" dash />
              <Level y={702} c="#666600" />
              <Level y={731} c="#ff0000" />
              <polyline points={line(leo)} fill="none" stroke="#00ffff" />
              <polyline points={line(sample(macdFast))} fill="none" stroke="#ff0000" />
              <polyline points={line(sample(macdSlow))} fill="none" stroke="#ffff00" />
              <line x1="1359" y1="608" x2="1838" y2="742" stroke="#ff00ff" />
            </Canvas>
          </PlotColumn>
          <Axis top={558} marks={leoMarks} />
        </Panel>

        <Panel $h={214}>
          <PlotColumn>
            <Legends
              cols={[164, 66, 58, 66, 64, 49, 49, 50, 119]}
              items={[["CCI Smothing ekam", "#fff"], ["-105.23", "#a0a0a0"], ["120.00", "#808080"], ["-120.00", "#808080"], ["-105.23", "#404040"], ["DMI", "#fff"], ["17.32", "#00ff00"], ["31.10", "#ff00ff"], ["Stoc colore", "#fff"], ["-0.78", "#c86400"]]}
            />
            <Canvas top={793}>
              <defs>
                <clipPath id="over"><rect x="0" y="780" width="1840" height="64" /></clipPath>
                <clipPath id="mid"><rect x="0" y="844" width="1840" height="107" /></clipPath>
                <clipPath id="under"><rect x="0" y="951" width="1840" height="40" /></clipPath>
              </defs>
              <Grid from={792} to={987} phase={6} />
              <path d={barXs.map((x) => `M${x + 0.5} ${ZERO}V${Math.round(linearAt(cci, x))}`).join("")} stroke="#404040" />
              <polyline points={line(stoc)} fill="none" stroke="#c86400" strokeDasharray="4 3" />
              <Level y={843} c="#808080" />
              <Level y={950} c="#808080" />
              <g fill="none">
                <polyline points={cciLine} stroke="#ff0000" clipPath="url(#over)" />
                <polyline points={cciLine} stroke="#a0a0a0" clipPath="url(#mid)" />
                <polyline points={cciLine} stroke="#00ffff" clipPath="url(#under)" />
                <polyline points={line(dmiPlus)} stroke="#00ff00" />
                <polyline points={line(dmiMinus)} stroke="#ff00ff" />
              </g>
              {highDots.map(([x, y]) => <ellipse key={x} cx={x + 0.5} cy={y} rx="4" ry="4.500" fill="#00ffff" />)}
              {lowDots.map(([x, y]) => <ellipse key={x} cx={x + 0.5} cy={y} rx="4" ry="4.500" fill="#ff0000" />)}
            </Canvas>
          </PlotColumn>
          <Axis top={774} marks={cciMarks} last />
        </Panel>

        <TimeAxis>
          <rect width="100%" height="1" />
          {[47, 591, 659, 727, 795, 863, 931, 999, 1067, 1135, 1815].map((x) => <rect key={x} x={x - 2} y="0" width="1" height="5" />)}
          {[71, 935].map((x) => <rect key={x} x={x - 2} y="0" width="1" height="11" />)}
          {days.map((d, i) => <text key={d} x={76 + i * 72} y="24">{d}</text>)}
        </TimeAxis>
      </Chart>

      <ScrollBar>
        <ArrowButton $w={12} aria-label="Scroll left"><svg width="5" height="8"><path d="M5 0v8L0 4z" fill="#444" /></svg></ArrowButton>
        <ScrollEnd>
          <Thumb aria-label="Scroll position" />
          <ArrowButton $w={12} aria-label="Scroll right"><svg width="5" height="8"><path d="M0 0v8l5-4z" fill="#444" /></svg></ArrowButton>
        </ScrollEnd>
      </ScrollBar>

      <TabStrip>
        {navIcons.map((d, i) => (
          <NavButton key={i} aria-label={navNames[i]}><svg width="13" height="10"><path d={d} fill="#666" stroke="#666" /></svg></NavButton>
        ))}
        <NavSpacer />
        {tabs.map(([t, w], i) => (
          <Tab key={t} $w={w} $active={i === ACTIVE}>
            <Slant viewBox="0 0 8 16">
              {i === ACTIVE + 1 ? (
                <><path d="M0 0h6L1 16H0z" fill="#fff" /><path d="M6.500 0l-5 16" fill="none" stroke="#000" /></>
              ) : (
                <path d={`M1.500 0l5 16${i > 0 ? "M.5 16l3-8" : ""}`} fill="none" stroke="#000" />
              )}
            </Slant>
            <TabLabel>{t}</TabLabel>
          </Tab>
        ))}
        <Slant viewBox="0 0 8 16"><path d="M6.500 0l-5 16" stroke="#000" /></Slant>
      </TabStrip>

      <StatusBar>
        <span>For Help, press F1</span>
        <StatusRight>
          <StatusCell $w={52}>Acct:</StatusCell>
          <StatusCell $w={90}>Open Psns:</StatusCell>
          <StatusCell $w={63}>DT BP:</StatusCell>
          <StatusCell $w={88}>Purch Pwr:</StatusCell>
          <StatusCell $w={92}>Closed P/L:</StatusCell>
          <StatusCell $w={60}>RT TE:</StatusCell>
          <StatusCell $w={84}>Open P/L:</StatusCell>
          <StatusCell $w={88} $c="#1d8a1d">ORDER BAR</StatusCell>
          <StatusCell $w={68} $c="#1d8a1d">MACROS</StatusCell>
          <StatusCell $w={19}><svg width="12" height="14"><circle cx="6" cy="6" r="5" fill="#e00000" stroke="#400" /><circle cx="4" cy="4" r="1.500" fill="#fbb" /></svg></StatusCell>
          <StatusCell $w={123}>03/08/2023 16:39</StatusCell>
        </StatusRight>
      </StatusBar>
      <TaskStrip />
    </Window>
  );
}
